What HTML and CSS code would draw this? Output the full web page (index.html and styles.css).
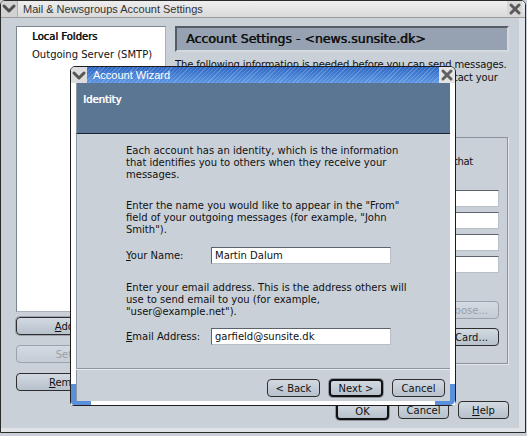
FILE: index.html
```html
<!DOCTYPE html>
<html lang="en">
<head>
  <meta charset="UTF-8" />
  <title>Mail &amp; Newsgroups Account Settings</title>
  <link rel="stylesheet" href="styles.css">
</head>
<body>
  <div class="window settings">
    <div class="titlebar">
      <span class="menu-btn">
        <svg width="16" height="16" viewBox="0 0 16 16"><polyline points="3,5 8,10 13,5" fill="none" stroke="#505050" stroke-width="3" stroke-linecap="round" stroke-linejoin="round"/></svg>
      </span>
      <span class="title">Mail &amp; Newsgroups Account Settings</span>
      <span class="close-btn">
        <svg width="14" height="14" viewBox="0 0 14 14"><path d="M3 3 L11 11 M11 3 L3 11" stroke="#5a5a5a" stroke-width="3" stroke-linecap="round"/></svg>
      </span>
    </div>

    <div class="client">
      <div class="left">
        <ul class="tree">
          <li class="bold">Local Folders</li>
          <li>Outgoing Server (SMTP)</li>
        </ul>
        <button class="btn btn-shadow"><u>A</u>dd Account...</button>
        <button class="btn btn-disabled">Set as <u>D</u>efault</button>
        <button class="btn btn-remove"><u>R</u>emove Account</button>
      </div>

      <div class="right">
        <div class="page-header bold">Account Settings - &lt;news.sunsite.dk&gt;</div>
        <p class="intro">The following information is needed before you can send messages.<br>If you do not know the information requested, please contact your<br>system administrator or Internet Service Provider.</p>

        <div class="groupbox">
          <div class="group-text"><span>Each account has an identity, which is the information that</span></div>
          <div class="field-row"><span>Your Name:</span><span class="input"></span></div>
          <div class="field-row"><span>Email Address:</span><span class="input"></span></div>
          <div class="field-row"><span>Reply-to Address:</span><span class="input"></span></div>
          <div class="field-row"><span>Organization:</span><span class="input"></span></div>
          <div class="choose-row"><button class="btn btn-disabled">Choose...</button></div>
          <div class="card-row"><button class="btn">Edit Card...</button></div>
        </div>

        <div class="dialog-buttons">
          <button class="btn btn-default">OK</button>
          <button class="btn">Cancel</button>
          <button class="btn"><u>H</u>elp</button>
        </div>
      </div>
    </div>
  </div>

  <div class="window wizard">
    <div class="wiz-titlebar">
      <span class="wiz-menu">
        <svg width="16" height="15" viewBox="0 0 16 15"><polyline points="3,5 8,10 13,5" fill="none" stroke="#555" stroke-width="3" stroke-linecap="round" stroke-linejoin="round"/></svg>
      </span>
      <span class="wiz-title">Account Wizard</span>
      <span class="wiz-close">
        <svg width="14" height="14" viewBox="0 0 14 14"><path d="M3 3 L11 11 M11 3 L3 11" stroke="#606060" stroke-width="3" stroke-linecap="round"/></svg>
      </span>
    </div>
    <div class="wiz-frame">
      <div class="wiz-header bold">Identity</div>
      <div class="wiz-body">
        <p class="p1">Each account has an identity, which is the information<br>that identifies you to others when they receive your<br>messages.</p>
        <p class="p2">Enter the name you would like to appear in the "From"<br>field of your outgoing messages (for example, "John<br>Smith").</p>
        <div class="wiz-row r1">
          <label><u>Y</u>our Name:</label>
          <span class="input">Martin Dalum</span>
        </div>
        <p class="p3">Enter your email address. This is the address others will<br>use to send email to you (for example,<br>"user@example.net").</p>
        <div class="wiz-row r2">
          <label><u>E</u>mail Address:</label>
          <span class="input">garfield@sunsite.dk</span>
        </div>
        <div class="wiz-buttons">
          <button class="btn">&lt; Back</button>
          <button class="btn btn-default">Next &gt;</button>
          <button class="btn">Cancel</button>
        </div>
      </div>
    </div>
  </div>
</body>
</html>
```

FILE: styles.css
```css
body {
  margin: 0;
  background: #c9d0d8;
  font-family: "DejaVu Sans", sans-serif;
  font-size: 10px;
  color: #111;
}
.bold {
  text-shadow: 0.6px 0 0 currentColor;
}

/* outer window */
.settings {
  width: 526px;
  height: 433px;
  box-sizing: border-box;
  border: 1px solid #2a2a2a;
  border-radius: 5px 5px 0 0;
  background: #c9d0d8;
  box-shadow: inset -6px -4px 0 #dfe3e8;
}
.titlebar {
  height: 16px;
  display: flex;
  align-items: center;
  background: linear-gradient(#eeeeee, #dadada);
  border-bottom: 1px solid #9a9a9a;
  border-radius: 4px 4px 0 0;
}
.menu-btn {
  width: 16px;
  height: 16px;
  background: #d2d2d2;
  border-right: 1px solid #b0b0b0;
  border-radius: 4px 0 0 0;
}
.title {
  flex: 1;
  margin-left: 5px;
  font-family: "Liberation Sans", sans-serif;
  font-size: 11px;
  color: #333;
}
.close-btn {
  width: 15px;
  height: 16px;
  margin-right: 3px;
  display: flex;
  align-items: center;
  justify-content: center;
  background: #d8d8d8;
}
.client {
  display: flex;
  gap: 9px;
  padding: 8px 0 0 15px;
}
.left {
  width: 150px;
  display: flex;
  flex-direction: column;
}
.tree {
  list-style: none;
  margin: 0;
  padding: 3px 0 0 15px;
  height: 281px;
  background: #fff;
  border: 1px solid #7d8590;
  border-right-color: #a9b0b9;
  border-bottom-color: #a9b0b9;
}
.tree li {
  height: 18px;
  line-height: 14px;
  white-space: nowrap;
}

/* buttons */
.btn {
  font-family: "DejaVu Sans", sans-serif;
  font-size: 10px;
  color: #111;
  height: 18px;
  padding: 0;
  white-space: nowrap;
  border: 1px solid #2e2e2e;
  border-radius: 4px;
  background: linear-gradient(#d2d9e1, #b7c1cc);
}
.left .btn {
  width: 150px;
  margin-top: 10px;
}
.left .btn-shadow {
  margin-top: 5px;
  box-shadow: 0 0 0 1px #9aa3ae;
}
.btn-disabled {
  color: #98a0aa;
  border-color: #9aa2ac;
  background: linear-gradient(#d4dae1, #c4ccd5);
}
.btn-default {
  border: 2px solid #111;
  box-shadow: 0 0 0 1px #8b949f;
}

/* right pane */
.right {
  width: 334px;
  display: flex;
  flex-direction: column;
}
.page-header {
  height: 22px;
  line-height: 22px;
  padding-left: 9px;
  background: #96a2b2;
  border: 2px solid #555c66;
  border-right-color: #d4d9df;
  border-bottom-color: #d4d9df;
  font-size: 12.5px;
  color: #111;
  white-space: nowrap;
}
.intro {
  margin: 6px 0 0 0;
  line-height: 13px;
  height: 78px;
  white-space: nowrap;
  letter-spacing: -0.15px;
}
.groupbox {
  margin-top: 1px;
  height: 227px;
  border: 1px solid #8a929c;
  box-shadow: 1px 1px 0 #e4e8ec;
  padding: 17px 8px 0 8px;
  box-sizing: border-box;
  margin-right: 1px;
}
.group-text {
  display: flex;
  justify-content: flex-end;
  margin: 0 0 22px 0;
  line-height: 13px;
  white-space: nowrap;
  padding-right: 26px;
  letter-spacing: -0.3px;
}
.field-row {
  display: flex;
  justify-content: space-between;
  align-items: center;
  height: 17px;
  margin-bottom: 5px;
}
.field-row .input {
  width: 200px;
}
.input {
  display: block;
  box-sizing: border-box;
  height: 17px;
  line-height: 15px;
  padding-left: 3px;
  background: #fff;
  border: 1px solid #5c636c;
  border-right-color: #b8bfc7;
  border-bottom-color: #b8bfc7;
}
.choose-row, .card-row {
  display: flex;
  justify-content: flex-end;
}
.choose-row {
  margin-top: 28px;
}
.choose-row .btn, .card-row .btn {
  padding: 0 10px;
}
.card-row {
  margin-top: 9px;
}
.dialog-buttons {
  display: flex;
  justify-content: flex-end;
  gap: 9px;
  margin-top: 37px;
}
.dialog-buttons .btn {
  width: 51px;
}
.dialog-buttons .btn-default {
  width: 53px;
  margin-top: 1px;
}

/* wizard */
.wizard {
  position: absolute;
  left: 70px;
  top: 66px;
  width: 386px;
  height: 340px;
  box-sizing: border-box;
  border: 1px solid #1e1e1e;
  border-radius: 5px 6px 6px 4px;
  background: #fff;
}
.wiz-titlebar {
  height: 16px;
  display: flex;
  align-items: stretch;
}
.wiz-menu {
  width: 16px;
  background: #dcdcdc;
  border-radius: 4px 0 0 0;
  display: flex;
  align-items: center;
}
.wiz-title {
  flex: 1;
  padding-left: 6px;
  line-height: 16px;
  font-family: "Liberation Sans", sans-serif;
  font-size: 11px;
  color: #fff;
  background:
    repeating-linear-gradient(135deg, rgba(255,255,255,0.18) 0 1px, rgba(255,255,255,0) 1px 3px),
    linear-gradient(#2f68c4, #5b95e2);
}
.wiz-close {
  width: 16px;
  display: flex;
  align-items: center;
  justify-content: center;
  background: #e4e4e4;
  border-radius: 0 5px 0 0;
}
.wiz-frame {
  position: relative;
  height: 318px;
  border: 5px solid #fff;
  border-top: 0;
  border-bottom-width: 4px;
}
.wiz-frame::before,
.wiz-frame::after {
  content: "";
  position: absolute;
  bottom: -4px;
  width: 15px;
  height: 17px;
  border-bottom: 4px solid #5b8fdc;
}
.wiz-frame::before {
  left: -5px;
  border-left: 5px solid #5b8fdc;
  border-radius: 0 0 0 4px;
}
.wiz-frame::after {
  right: -5px;
  border-right: 5px solid #5b8fdc;
  border-radius: 0 0 5px 0;
}
.wiz-header {
  height: 51px;
  box-sizing: border-box;
  border-bottom: 1px solid #1a2430;
  background: #5b7693;
  color: #fff;
  font-size: 10px;
  padding: 11px 0 0 6px;
  border-left: 1px solid #8a96a4;
}
.wiz-body {
  position: relative;
  height: 267px;
  background: #c9d0d8;
  padding: 11px 0 0 49px;
  box-sizing: border-box;
  border-left: 1px solid #8a96a4;
}
.wiz-body p {
  margin: 0;
  line-height: 12px;
  white-space: nowrap;
}
.wiz-body .p2 {
  margin-top: 19px;
}
.wiz-body .p3 {
  margin-top: 18px;
}
.wiz-row {
  display: flex;
  align-items: center;
}
.wiz-row.r1 {
  margin-top: 11px;
}
.wiz-row.r2 {
  margin-top: 10px;
}
.wiz-row label {
  width: 85px;
}
.wiz-row .input {
  width: 180px;
}
.wiz-buttons {
  position: absolute;
  left: -1px;
  right: 0;
  bottom: 0;
  height: 33px;
  border-top: 1px solid #8e98a3;
  box-shadow: inset 0 1px 0 #e6eaee;
  display: flex;
  justify-content: flex-end;
  align-items: flex-start;
  gap: 9px;
  padding: 10px 5px 0 0;
  box-sizing: border-box;
}
.wiz-buttons .btn {
  width: 53px;
}
.wiz-buttons .btn-default {
  width: 54px;
}
```
